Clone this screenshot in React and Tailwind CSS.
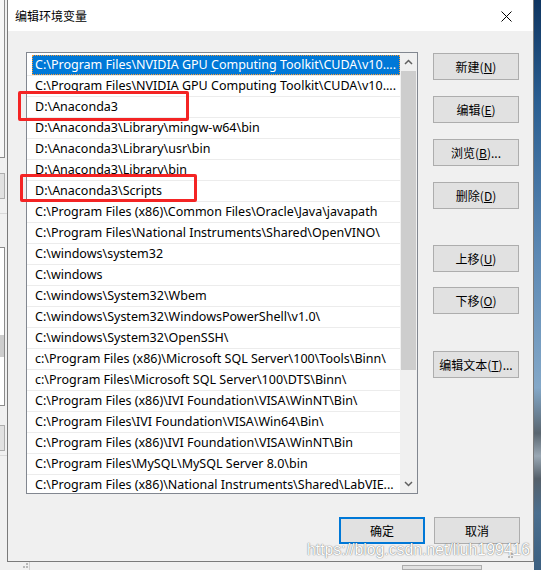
const paths = [
  "C:\\Program Files\\NVIDIA GPU Computing Toolkit\\CUDA\\v10....",
  "C:\\Program Files\\NVIDIA GPU Computing Toolkit\\CUDA\\v10....",
  "D:\\Anaconda3",
  "D:\\Anaconda3\\Library\\mingw-w64\\bin",
  "D:\\Anaconda3\\Library\\usr\\bin",
  "D:\\Anaconda3\\Library\\bin",
  "D:\\Anaconda3\\Scripts",
  "C:\\Program Files (x86)\\Common Files\\Oracle\\Java\\javapath",
  "C:\\Program Files\\National Instruments\\Shared\\OpenVINO\\",
  "C:\\windows\\system32",
  "C:\\windows",
  "C:\\windows\\System32\\Wbem",
  "C:\\windows\\System32\\WindowsPowerShell\\v1.0\\",
  "C:\\windows\\System32\\OpenSSH\\",
  "c:\\Program Files (x86)\\Microsoft SQL Server\\100\\Tools\\Binn\\",
  "c:\\Program Files\\Microsoft SQL Server\\100\\DTS\\Binn\\",
  "C:\\Program Files (x86)\\IVI Foundation\\VISA\\WinNT\\Bin\\",
  "C:\\Program Files\\IVI Foundation\\VISA\\Win64\\Bin\\",
  "C:\\Program Files (x86)\\IVI Foundation\\VISA\\WinNT\\Bin",
  "C:\\Program Files\\MySQL\\MySQL Server 8.0\\bin",
  "C:\\Program Files (x86)\\National Instruments\\Shared\\LabVIE...",
];

const sideButtons = [
  { label: "新建", key: "N", mt: "mt-[1px]" },
  { label: "编辑", key: "E", mt: "mt-[16px]" },
  { label: "浏览", key: "B", tail: "...", mt: "mt-[16px]" },
  { label: "删除", key: "D", mt: "mt-[16px]" },
  { label: "上移", key: "U", mt: "mt-[36px]" },
  { label: "下移", key: "O", mt: "mt-[15px]" },
  { label: "编辑文本", key: "T", tail: "...", mt: "mt-[37px]" },
];

function WinButton({ children, primary, className = "" }) {
  return (
    <div
      className={`w-[86px] h-[27px] flex items-center justify-center bg-[#e1e1e1] text-[12px] text-black ${
        primary ? "border-2 border-[#0078d7]" : "border border-[#adadad]"
      } ${className}`}
    >
      {children}
    </div>
  );
}

function Chevron({ down }) {
  return (
    <svg width="9" height="6" viewBox="0 0 9 6">
      <path
        d={down ? "M1 1 L4.5 4.5 L8 1" : "M1 5 L4.5 1.5 L8 5"}
        fill="none"
        stroke="#606060"
        strokeWidth="1.5"
      />
    </svg>
  );
}

function PathList() {
  return (
    <div className="w-[392px] h-[442px] border border-[#828790] bg-white flex overflow-hidden">
      <div className="flex-1 flex flex-col pt-[2px] overflow-hidden">
        {paths.map((p, i) => (
          <div
            key={i}
            className="h-[21px] shrink-0 border-b border-[#ececec] pl-[5px] flex"
          >
            <div
              className={`flex-1 h-full flex items-center px-[3px] whitespace-nowrap text-[12.5px] ${
                i === 0
                  ? "bg-[#0078d7] text-white outline-1 outline-dotted outline-[#f59a3a] -outline-offset-1"
                  : "text-black"
              }`}
            >
              {p}
            </div>
          </div>
        ))}
      </div>
      <div className="w-[17px] bg-[#f0f0f0] flex flex-col">
        <div className="h-[18px] flex items-center justify-center">
          <Chevron />
        </div>
        <div className="h-[299px] bg-[#cdcdcd] mx-[1px]" />
        <div className="flex-1" />
        <div className="h-[18px] flex items-center justify-center">
          <Chevron down />
        </div>
      </div>
    </div>
  );
}

function BehindLeft() {
  return (
    <div className="w-[7px] bg-[#f0f0f0] flex flex-col">
      <div className="h-[158px] w-[5px] bg-[#f7f7f7] border-r border-b border-[#8c8c8c]" />
      <div className="mt-[15px] h-[26px] w-[5px] bg-[#e1e1e1] border-y border-r border-[#adadad]" />
      <div className="mt-[14px] h-px bg-[#d9d9d9]" />
      <div className="mt-[33px] h-[159px] w-[5px] bg-white border-y border-r border-[#8c8c8c] flex flex-col">
        <div className="mt-[87px] h-[22px] bg-[#cdcdcd]" />
      </div>
      <div className="mt-[19px] h-[26px] w-[5px] bg-[#e1e1e1] border-y border-r border-[#adadad]" />
      <div className="mt-[4px] h-px bg-[#d9d9d9]" />
    </div>
  );
}

function Grip() {
  return (
    <svg width="8" height="8" viewBox="0 0 8 8">
      <rect x="5" y="1" width="2" height="2" fill="#b8b8b8" />
      <rect x="2" y="4" width="2" height="2" fill="#b8b8b8" />
      <rect x="5" y="4" width="2" height="2" fill="#b8b8b8" />
    </svg>
  );
}

export default function App() {
  return (
    <div
      className="relative w-[541px] h-[570px] overflow-hidden flex bg-[#f0f0f0]"
      style={{ fontFamily: '"Noto Sans","Noto Sans CJK SC",sans-serif' }}
    >
      <div className="w-[534px] flex flex-col">
        <div className="flex h-[563px]">
          <BehindLeft />
          {/* dialog */}
          <div className="w-[527px] h-full border-x border-b border-[#7a7a7a] flex flex-col bg-[#f0f0f0]">
            <div className="h-[31px] bg-white flex items-center justify-between pl-[7px] pr-[21px] pt-[1px]">
              <span
                className="text-[12px] text-black"
                style={{ fontFamily: '"Noto Sans CJK SC",sans-serif' }}
              >
                编辑环境变量
              </span>
              <svg width="11" height="11" viewBox="0 0 11 11">
                <path d="M0.5 0.5 L10.5 10.5 M10.5 0.5 L0.5 10.5" stroke="#000" strokeWidth="1" />
              </svg>
            </div>
            <div className="flex-1 flex flex-col pt-[21px] pl-[18px] pr-[13px]">
              <div className="flex gap-[15px]">
                <PathList />
                <div
                  className="flex flex-col"
                  style={{ fontFamily: '"Noto Sans CJK SC",sans-serif' }}
                >
                  {sideButtons.map((b) => (
                    <WinButton key={b.label} className={b.mt}>
                      {b.label}(<span className="underline">{b.key}</span>){b.tail}
                    </WinButton>
                  ))}
                </div>
              </div>
              <div
                className="mt-[23px] flex justify-end gap-[9px]"
                style={{ fontFamily: '"Noto Sans CJK SC",sans-serif' }}
              >
                <WinButton primary>确定</WinButton>
                <WinButton>取消</WinButton>
              </div>
              <div className="flex-1 flex justify-end items-end pb-[1px] pr-[6px]">
                <Grip />
              </div>
            </div>
          </div>
        </div>
        {/* strip of the window behind */}
        <div className="flex-1 flex">
          <div className="w-[21px]" />
          <Grip />
          <div className="w-[2px] border-l border-[#d0d0d0]" />
          <div className="w-[371px]" />
          <div className="mt-[3px] w-[80px] bg-[#e1e1e1] border border-[#adadad]" />
        </div>
      </div>
      <div className="flex-1 bg-[linear-gradient(to_bottom,#0f3561_0%,#2b5f92_18%,#5d89b4_45%,#84a8c8_68%,#5a6670_76%,#9aa8b4_80%,#55606a_84%,#4b6f8f_90%,#3b5f80_100%)]" />

      {/* red highlight boxes */}
      <div className="absolute left-[18px] top-[91px] w-[171px] h-[30px] border-[3px] border-[#f42424] rounded-[2px]" />
      <div className="absolute left-[20px] top-[174px] w-[177px] h-[28px] border-[3px] border-[#f42424] rounded-[2px]" />

      {/* watermark */}
      <div
        className="absolute left-[307px] top-[540px] text-[15.8px] leading-[20px] text-[#fdfdfd] [text-shadow:0_0_1px_rgba(0,0,0,0.6),0_0_2px_rgba(0,0,0,0.2)]"
        style={{ fontFamily: '"Liberation Sans",Arial,sans-serif' }}
      >
        https://blog.csdn.net/liuh199416
      </div>
    </div>
  );
}
